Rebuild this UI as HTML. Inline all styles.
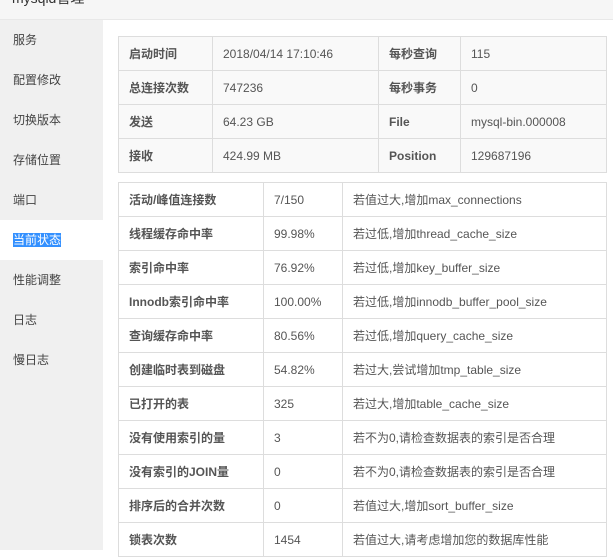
<!DOCTYPE html>
<html><head><meta charset="utf-8"><style>
*{margin:0;padding:0;box-sizing:border-box}
body{width:613px;height:550px;overflow:hidden;background:#fff;font-family:"Liberation Sans","Noto Sans CJK SC",sans-serif;font-size:12px;color:#555;position:relative}
.hd{position:absolute;left:0;top:0;width:613px;height:20px;background:#f6f6f6;border-bottom:1px solid #e8e8e8;overflow:hidden}
.hd span{position:absolute;left:12px;top:-12px;font-size:14px;color:#333}
.sb{position:absolute;left:0;top:20px;width:103px;height:530px;background:#f0f0f0}
.sb div{height:40px;line-height:40px;padding-left:13px;color:#444}
.sb div.on{background:#fff}
.sb div.on span{background:#3390ff;color:#fff}
table{position:absolute;border-collapse:collapse;left:118px;width:489px;table-layout:fixed}
td{border:1px solid #ddd;height:34px;padding:0 10px;white-space:nowrap;overflow:hidden}
td.b{font-weight:bold;color:#555}
#t1{top:36px}
#t1 td{background:#f9f9f9}
#t2{top:182px}
</style></head><body>
<div class="hd"><span>mysqld管理</span></div>
<div class="sb">
<div>服务</div><div>配置修改</div><div>切换版本</div><div>存储位置</div><div>端口</div><div class="on"><span>当前状态</span></div><div>性能调整</div><div>日志</div><div>慢日志</div>
</div>
<table id="t1"><colgroup><col style="width:94px"><col style="width:166px"><col style="width:82px"><col></colgroup>
<tr><td class="b">启动时间</td><td>2018/04/14 17:10:46</td><td class="b">每秒查询</td><td>115</td></tr>
<tr><td class="b">总连接次数</td><td>747236</td><td class="b">每秒事务</td><td>0</td></tr>
<tr><td class="b">发送</td><td>64.23 GB</td><td class="b">File</td><td>mysql-bin.000008</td></tr>
<tr><td class="b">接收</td><td>424.99 MB</td><td class="b">Position</td><td>129687196</td></tr>
</table>
<table id="t2"><colgroup><col style="width:145px"><col style="width:79px"><col></colgroup>
<tr><td class="b">活动/峰值连接数</td><td>7/150</td><td>若值过大,增加max_connections</td></tr>
<tr><td class="b">线程缓存命中率</td><td>99.98%</td><td>若过低,增加thread_cache_size</td></tr>
<tr><td class="b">索引命中率</td><td>76.92%</td><td>若过低,增加key_buffer_size</td></tr>
<tr><td class="b">Innodb索引命中率</td><td>100.00%</td><td>若过低,增加innodb_buffer_pool_size</td></tr>
<tr><td class="b">查询缓存命中率</td><td>80.56%</td><td>若过低,增加query_cache_size</td></tr>
<tr><td class="b">创建临时表到磁盘</td><td>54.82%</td><td>若过大,尝试增加tmp_table_size</td></tr>
<tr><td class="b">已打开的表</td><td>325</td><td>若过大,增加table_cache_size</td></tr>
<tr><td class="b">没有使用索引的量</td><td>3</td><td>若不为0,请检查数据表的索引是否合理</td></tr>
<tr><td class="b">没有索引的JOIN量</td><td>0</td><td>若不为0,请检查数据表的索引是否合理</td></tr>
<tr><td class="b">排序后的合并次数</td><td>0</td><td>若值过大,增加sort_buffer_size</td></tr>
<tr><td class="b">锁表次数</td><td>1454</td><td>若值过大,请考虑增加您的数据库性能</td></tr>
</table>
</body></html>
